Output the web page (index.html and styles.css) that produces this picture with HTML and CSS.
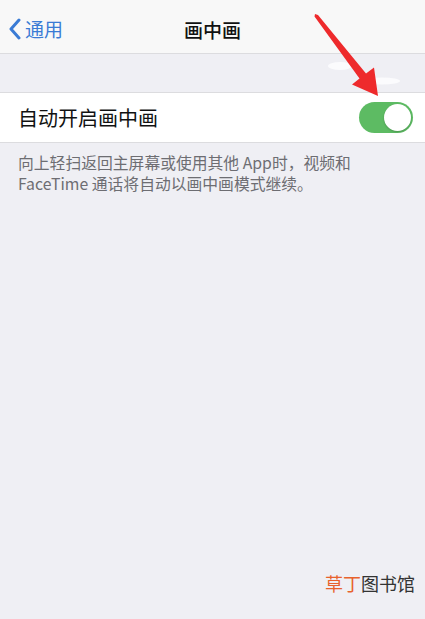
FILE: index.html
```html
<!DOCTYPE html>
<html lang="zh">
<head>
  <meta charset="UTF-8">
  <title>画中画</title>
  <link rel="stylesheet" href="styles.css">
</head>
<body>

  <div class="nav">
    <div class="back">
      <svg class="chevron" width="14" height="22" viewBox="0 0 14 22">
        <path d="M11 2 L3 11 L11 20" fill="none" stroke="#3a7bd5" stroke-width="3" stroke-linecap="round" stroke-linejoin="round"/>
      </svg>
      <span>通用</span>
    </div>
    <div class="title">画中画</div>
  </div>

  <div class="gap"></div>

  <div class="row">
    <span class="label">自动开启画中画</span>
    <div class="switch"><div class="knob"></div></div>
  </div>

  <p class="note">向上轻扫返回主屏幕或使用其他 App时，视频和<br>FaceTime 通话将自动以画中画模式继续。</p>

  <div class="mark"><span class="orange">草丁</span>图书馆</div>

  <!-- annotation over the screenshot -->
  <svg class="arrow" width="425" height="110" viewBox="0 0 425 110">
    <ellipse cx="340" cy="66" rx="12" ry="4" fill="#fbfbfd"/>
    <ellipse cx="382" cy="81" rx="18" ry="3.5" fill="#fbfbfd"/>
    <polygon points="315,14 318,15 366,73.5 374,67.5 378,96 352,84.5 359.5,78.5 314.5,16.5" fill="#ee2a2c"/>
  </svg>

</body>
</html>
```

FILE: styles.css
```css
body {
  margin: 0;
  width: 425px;
  height: 619px;
  background-color: #efeff4;
  font-family: "Noto Sans CJK SC", "Noto Sans", sans-serif;
  position: relative;
  overflow: hidden;
}

.nav {
  height: 53px;
  background-color: #f8f8f8;
  border-bottom: 1px solid #dcdcdf;
  position: relative;
  display: flex;
  align-items: center;
  justify-content: center;
}

.back {
  position: absolute;
  left: 8px;
  top: 2px;
  height: 53px;
  display: flex;
  align-items: center;
  gap: 3px;
  color: #3a7bd5;
  font-size: 19px;
}

.chevron {
  margin-top: 1px;
}

.title {
  font-size: 19px;
  font-weight: 500;
  color: #111;
  margin-top: 5px;
}

.gap {
  height: 38px;
}

.row {
  height: 49px;
  background: white;
  border-top: 1px solid #dcdcdf;
  border-bottom: 1px solid #dcdcdf;
  display: flex;
  align-items: center;
  justify-content: space-between;
  padding: 0 12px 0 18px;
}

.label {
  font-size: 20px;
  color: #111;
}

.switch {
  width: 54px;
  height: 31px;
  border-radius: 16px;
  background-color: #5dbb63;
  position: relative;
}

.knob {
  position: absolute;
  right: 2px;
  top: 2px;
  width: 27px;
  height: 27px;
  border-radius: 50%;
  background: white;
  box-shadow: 0 1px 2px rgba(0,0,0,0.2);
}

.note {
  margin: 9px 18px 0;
  font-size: 15.8px;
  line-height: 21px;
  color: #6d6d72;
}

.mark {
  position: absolute;
  right: 10px;
  top: 570px;
  font-size: 18px;
  color: #333;
}

.orange {
  color: #e8622c;
}

.arrow {
  position: absolute;
  left: 0;
  top: 0;
}
```
